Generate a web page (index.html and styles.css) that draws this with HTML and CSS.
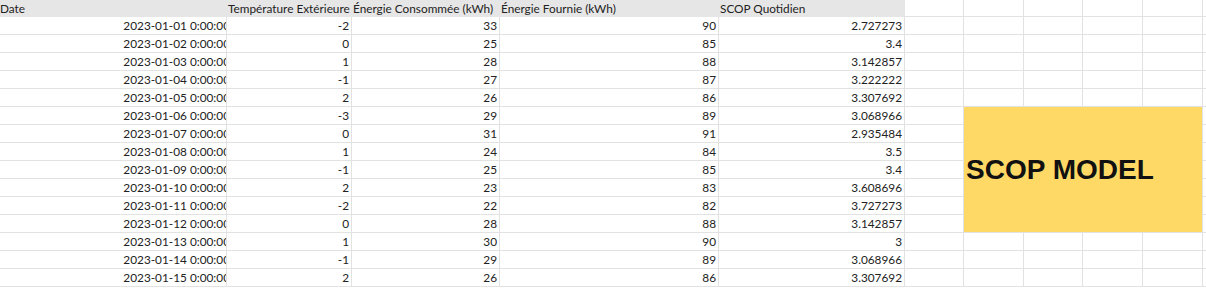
FILE: index.html
```html
<!DOCTYPE html>
<html lang="fr">
<head>
<meta charset="utf-8">
<title>SCOP</title>
<link rel="stylesheet" href="styles.css">
</head>
<body>
<div class="sheet">
  <div class="c h first">Date</div>
  <div class="c h">Température Extérieure</div>
  <div class="c h">Énergie Consommée (kWh)</div>
  <div class="c h">Énergie Fournie (kWh)</div>
  <div class="c h last">SCOP Quotidien</div>
  <div class="c"></div><div class="c"></div><div class="c"></div><div class="c"></div><div class="c"></div><div class="c end"></div>

  <div class="c n d"><span>2023-01-01 0:00:00</span></div><div class="c n">-2</div><div class="c n">33</div><div class="c n">90</div><div class="c n">2.727273</div>
  <div class="c"></div><div class="c"></div><div class="c"></div><div class="c"></div><div class="c"></div><div class="c end"></div>

  <div class="c n d"><span>2023-01-02 0:00:00</span></div><div class="c n">0</div><div class="c n">25</div><div class="c n">85</div><div class="c n">3.4</div>
  <div class="c"></div><div class="c"></div><div class="c"></div><div class="c"></div><div class="c"></div><div class="c end"></div>

  <div class="c n d"><span>2023-01-03 0:00:00</span></div><div class="c n">1</div><div class="c n">28</div><div class="c n">88</div><div class="c n">3.142857</div>
  <div class="c"></div><div class="c"></div><div class="c"></div><div class="c"></div><div class="c"></div><div class="c end"></div>

  <div class="c n d"><span>2023-01-04 0:00:00</span></div><div class="c n">-1</div><div class="c n">27</div><div class="c n">87</div><div class="c n">3.222222</div>
  <div class="c"></div><div class="c"></div><div class="c"></div><div class="c"></div><div class="c"></div><div class="c end"></div>

  <div class="c n d"><span>2023-01-05 0:00:00</span></div><div class="c n">2</div><div class="c n">26</div><div class="c n">86</div><div class="c n">3.307692</div>
  <div class="c"></div><div class="c"></div><div class="c"></div><div class="c"></div><div class="c"></div><div class="c end"></div>

  <div class="c n d"><span>2023-01-06 0:00:00</span></div><div class="c n">-3</div><div class="c n">29</div><div class="c n">89</div><div class="c n">3.068966</div>
  <div class="c"></div><div class="merged">SCOP MODEL</div><div class="c end"></div>

  <div class="c n d"><span>2023-01-07 0:00:00</span></div><div class="c n">0</div><div class="c n">31</div><div class="c n">91</div><div class="c n">2.935484</div>
  <div class="c"></div><div class="c end"></div>

  <div class="c n d"><span>2023-01-08 0:00:00</span></div><div class="c n">1</div><div class="c n">24</div><div class="c n">84</div><div class="c n">3.5</div>
  <div class="c"></div><div class="c end"></div>

  <div class="c n d"><span>2023-01-09 0:00:00</span></div><div class="c n">-1</div><div class="c n">25</div><div class="c n">85</div><div class="c n">3.4</div>
  <div class="c"></div><div class="c end"></div>

  <div class="c n d"><span>2023-01-10 0:00:00</span></div><div class="c n">2</div><div class="c n">23</div><div class="c n">83</div><div class="c n">3.608696</div>
  <div class="c"></div><div class="c end"></div>

  <div class="c n d"><span>2023-01-11 0:00:00</span></div><div class="c n">-2</div><div class="c n">22</div><div class="c n">82</div><div class="c n">3.727273</div>
  <div class="c"></div><div class="c end"></div>

  <div class="c n d"><span>2023-01-12 0:00:00</span></div><div class="c n">0</div><div class="c n">28</div><div class="c n">88</div><div class="c n">3.142857</div>
  <div class="c"></div><div class="c end"></div>

  <div class="c n d"><span>2023-01-13 0:00:00</span></div><div class="c n">1</div><div class="c n">30</div><div class="c n">90</div><div class="c n">3</div>
  <div class="c"></div><div class="c"></div><div class="c"></div><div class="c"></div><div class="c"></div><div class="c end"></div>

  <div class="c n d"><span>2023-01-14 0:00:00</span></div><div class="c n">-1</div><div class="c n">29</div><div class="c n">89</div><div class="c n">3.068966</div>
  <div class="c"></div><div class="c"></div><div class="c"></div><div class="c"></div><div class="c"></div><div class="c end"></div>

  <div class="c n d"><span>2023-01-15 0:00:00</span></div><div class="c n">2</div><div class="c n">26</div><div class="c n">86</div><div class="c n">3.307692</div>
  <div class="c"></div><div class="c"></div><div class="c"></div><div class="c"></div><div class="c"></div><div class="c end"></div>
</div>
</body>
</html>
```

FILE: styles.css
```css
html, body {
  margin: 0;
  padding: 0;
  background: #ffffff;
  overflow: hidden;
}

.sheet {
  display: grid;
  grid-template-columns: 227px 125px 148px 219px 186px 59px 60px 59px 60px 60px 3px;
  grid-template-rows: 17px;
  grid-auto-rows: 18px;
  width: 1206px;
  height: 288px;
  overflow: hidden;
  font-family: "Lato", "Open Sans", sans-serif;
  font-size: 11.8px;
  color: #222222;
}

.c {
  box-sizing: border-box;
  border-right: 1px solid #e2e2e2;
  border-bottom: 1px solid #e2e2e2;
  padding: 0 2px;
  display: flex;
  align-items: center;
  white-space: nowrap;
  overflow: hidden;
}

.c.end {
  border-right: none;
}

.c.h {
  background: #e7e6e6;
  border-right: none;
  border-bottom-color: #e7e6e6;
  padding-left: 1px;
}

.c.h.first {
  padding-left: 0;
}

.c.n {
  justify-content: flex-end;
}

.c.d span {
  margin-right: -6px;
}

.merged {
  grid-column: 7 / 11;
  grid-row: 7 / 14;
  box-sizing: border-box;
  background: #ffd966;
  border-right: 1px solid #e2e2e2;
  border-bottom: 1px solid #e2e2e2;
  display: flex;
  align-items: center;
  padding-left: 2px;
  font-family: "Liberation Sans", Arial, sans-serif;
  font-weight: bold;
  font-size: 28px;
  color: #111111;
  white-space: nowrap;
}
```
